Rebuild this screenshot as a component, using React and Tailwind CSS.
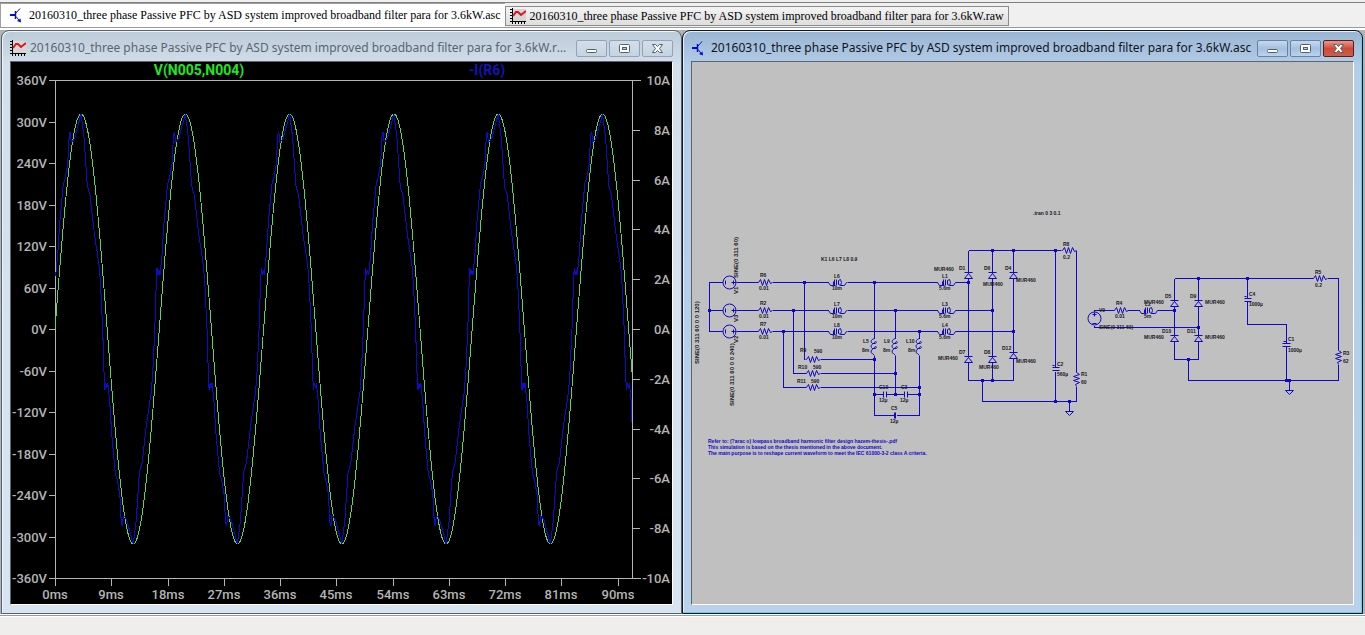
import clsx from 'clsx'

const FILE_NAME = '20160310_three phase Passive PFC by ASD system improved broadband filter para for 3.6kW'

// ---------- icons ----------

function SchematicIcon() {
  return (
    <svg viewBox="0 0 16 16" className="w-4 h-4 shrink-0" stroke="#0a0acd" fill="none">
      <path d="M1 8H6" strokeWidth="2" shapeRendering="crispEdges" />
      <path d="M6.500 4V12" strokeWidth="1.500" />
      <path d="M7 6L11 1.500M7 9.500L11 14.500" />
      <path d="M8 14L12 15.500L11.500 11.500Z" fill="#0a0acd" stroke="none" />
    </svg>
  )
}

function WaveIcon() {
  return (
    <svg viewBox="0 0 16 16" className="w-4 h-4 shrink-0" fill="none">
      <rect x="3" y="1" width="13" height="12" fill="#d6d6d6" />
      <path d="M2.500 0V16M0 13.500H16" stroke="#000" shapeRendering="crispEdges" />
      <path d="M0 1.500H2M0 4.500H2M0 7.500H2M0 10.500H2M5.500 14V16M8.500 14V16M11.500 14V16M14.500 14V16" stroke="#000" shapeRendering="crispEdges" />
      <path d="M3 8L6 4L8 4L11 7L16 3" stroke="#e0141c" strokeWidth="2" />
    </svg>
  )
}

function CaptionButton({ kind, active }) {
  const red = kind === 'Close' && active
  return (
    <button
      type="button"
      aria-label={kind}
      className={clsx(
        'w-[31px] h-[17px] rounded-xs border flex items-center justify-center',
        red && 'border-[#5c1a1a] bg-linear-to-b from-[#e39a8c] via-[#cf4a34] to-[#c8604c]',
        !red && active && 'border-[#6683a5] bg-linear-to-b from-[#c6d9ee] via-[#a4c0df] to-[#b9d3ec]',
        !red && !active && 'border-[#93a3b4] bg-linear-to-b from-[#d3deea] to-[#c5d3e2]'
      )}
    >
      <svg viewBox="0 0 13 11" className="w-[13px] h-[11px]" fill="#fff" stroke="#54606e">
        {kind === 'Minimize' && <rect x="1.500" y="6.500" width="10" height="3" rx="1" />}
        {kind === 'Restore' && (
          <>
            <rect x="1.500" y="1.500" width="10" height="8" rx="1" />
            <rect x="4.500" y="4.500" width="4" height="2" fill="#b4c8de" />
          </>
        )}
        {kind === 'Close' && (
          <path d="M1.500 1.500H4.500L6.500 3.500L8.500 1.500H11.500L8.500 5.500L11.500 9.500H8.500L6.500 7.500L4.500 9.500H1.500L4.500 5.500Z" />
        )}
      </svg>
    </button>
  )
}

// ---------- waveform plot ----------

const VOLT_TICKS = [
  [80, '360V'], [122, '300V'], [163, '240V'], [205, '180V'], [246, '120V'], [288, '60V'], [329, '0V'],
  [371, '-60V'], [412, '-120V'], [454, '-180V'], [495, '-240V'], [537, '-300V'], [578, '-360V'],
]
const AMP_TICKS = [
  [80, '10A'], [130, '8A'], [180, '6A'], [229, '4A'], [279, '2A'], [329, '0A'],
  [379, '-2A'], [429, '-4A'], [478, '-6A'], [528, '-8A'], [578, '-10A'],
]
const TIME_TICKS = [
  [55, '0ms'], [111, '9ms'], [168, '18ms'], [224, '27ms'], [280, '36ms'], [336, '45ms'],
  [393, '54ms'], [449, '63ms'], [505, '72ms'], [561, '81ms'], [618, '90ms'],
]

const PERIOD = 104.3
const LEFT = 55
const RIGHT = 632
const ZERO = 329

// one half cycle of the line current, [dx, height above zero]
const HALF_WAVE = [
  [0, 61], [1, 54], [2, 59], [3, 54], [5, 74], [7, 106], [10.6, 145], [12.5, 151], [15, 165], [16.5, 194],
  [17.5, 197], [18.5, 187], [20, 188], [22, 191], [24.6, 201], [28.3, 215], [31.3, 192], [34.6, 143],
  [37.3, 134], [41.6, 96], [46.6, 62], [48, 42], [50, 0], [51.2, -40],
]

function voltagePath() {
  const pts = []
  for (let x = LEFT; x <= RIGHT; x++) {
    pts.push(`${x},${(ZERO - 215 * Math.sin((2 * Math.PI * (x - LEFT)) / PERIOD)).toFixed(1)}`)
  }
  return pts.join(' ')
}

function currentPath() {
  const pts = ['55,275']
  for (let n = 0; n < 12; n++) {
    const start = 52.7 + (n * PERIOD) / 2
    const sign = n % 2 ? -1 : 1
    HALF_WAVE.forEach(([dx, h]) => {
      const x = start + dx
      if (x > LEFT && x <= RIGHT) pts.push(`${x.toFixed(1)},${ZERO - sign * h}`)
    })
  }
  pts.push('632,422')
  return pts.join(' ')
}

function WaveformPlot() {
  return (
    <svg viewBox="11 62 661 542" className="block w-full h-auto bg-black font-['Roboto',sans-serif] font-medium text-[13px]">
      <g stroke="#b4b4b4" fill="none" transform="translate(.5 .5)" shapeRendering="crispEdges">
        <path d="M48 80H640M48 578H640M55 80V578M632 80V578" />
        {VOLT_TICKS.map(([y]) => <path key={y} d={`M48 ${y}H55`} />)}
        {AMP_TICKS.map(([y]) => <path key={y} d={`M632 ${y}H639`} />)}
        {TIME_TICKS.map(([x]) => <path key={x} d={`M${x} 578V585`} />)}
      </g>
      <g fill="none" shapeRendering="crispEdges">
        <polyline points={voltagePath()} stroke="#5cd45c" />
        <polyline points={currentPath()} stroke="#0c0ccc" />
      </g>
      <g fill="#b4b4b4">
        {VOLT_TICKS.map(([y, t]) => <text key={t} x="47" y={y + 5} textAnchor="end">{t}</text>)}
        {AMP_TICKS.map(([y, t]) => <text key={t} x="670" y={y + 5} textAnchor="end">{t}</text>)}
        {TIME_TICKS.map(([x, t]) => <text key={t} x={x} y="599" textAnchor="middle">{t}</text>)}
      </g>
      <g className="font-bold text-[14px]" textAnchor="middle">
        <text x="199" y="75" fill="#22e622">V(N005,N004)</text>
        <text x="487" y="75" fill="#1414b4">-I(R6)</text>
      </g>
    </svg>
  )
}

// ---------- schematic ----------

const WIRES = [
  // three phase sources
  'M722 282H709V331H722M709 310H722',
  'M736 282H757M736 310H757M736 331H757',
  'M772 282H828M772 310H828M772 331H828',
  'M847 282H937M847 310H937M847 331H937',
  'M955 282H968M955 310H992M955 331H1013',
  // damping resistors and trap filter
  'M804 282V359M820 359H874',
  'M793 310V373H805M820 373H895',
  'M783 331V387H805M820 387H919',
  'M874 282V338M874 355V415H894M896 415H919V355',
  'M895 310V338M895 355V394M919 331V338',
  'M874 394H883M886 394H904M907 394H919',
  // main rectifier
  'M968 250H1060M968 250V380M992 250V380M1013 250V380M968 380H1013',
  'M982 380V401H1076V386M1076 371V250',
  'M1055 250V367M1055 371V401M1069 401V411',
  // single phase branch
  'M1094 311V310H1113M1127 310H1139M1157 310H1174',
  'M1094 325V327H1198',
  'M1174 278V359H1198V278M1174 278H1312M1327 278H1338V349M1338 364V380H1188V359',
  'M1247 278V298M1247 301V324H1286V342M1286 346V380M1289 380V390',
]

const JUNCTIONS = [
  [709, 310], [804, 282], [874, 282], [793, 310], [895, 310], [783, 331], [919, 331],
  [874, 359], [895, 373], [919, 387], [874, 394], [895, 394], [919, 394],
  [992, 250], [1013, 250], [1055, 250], [968, 282], [992, 310], [1013, 331], [982, 380], [992, 380],
  [1055, 401], [1069, 401], [1174, 310], [1198, 327], [1198, 278], [1247, 278], [1188, 359],
  [1286, 380], [1289, 380],
]

const RESISTORS = [
  [757, 282], [757, 310], [757, 331], [805, 359], [805, 373], [805, 387], [1061, 250], [1113, 310], [1312, 278],
  [1076, 371, 90], [1338, 349, 90],
]
const COILS = [[828, 282], [828, 310], [828, 331], [937, 282], [937, 310], [937, 331], [1139, 310]]
const TALL_COILS = [[874, 338], [895, 338], [919, 338]]
const DIODES = [
  [968, 275], [992, 275], [1013, 275], [968, 359], [992, 359], [1013, 355],
  [1174, 303], [1198, 303], [1174, 338], [1198, 338],
]

const LABELS = [
  [1033, 215, '.tran 0 3 0.1'], [821, 261, 'K1 L6 L7 L8 0.9'],
  [760, 277, 'R6'], [759, 290, '0.01'], [760, 305, 'R2'], [759, 318, '0.01'], [760, 326, 'R7'], [759, 339, '0.01'],
  [834, 278, 'L6'], [832, 290, '10m'], [834, 306, 'L7'], [832, 318, '10m'], [834, 327, 'L8'], [832, 339, '10m'],
  [942, 278, 'L1'], [939, 290, '5.6m'], [942, 306, 'L3'], [939, 318, '5.6m'], [942, 327, 'L4'], [939, 339, '5.6m'],
  [800, 352, 'R9'], [814, 353, '590'], [798, 369, 'R10'], [813, 369, '590'], [797, 383, 'R11'], [811, 383, '590'],
  [863, 343, 'L5'], [862, 352, '8m'], [884, 343, 'L9'], [883, 352, '8m'], [906, 343, 'L10'], [908, 352, '8m'],
  [879, 389, 'C10'], [879, 402, '12µ'], [901, 389, 'C3'], [900, 402, '12µ'], [891, 410, 'C5'], [890, 423, '12µ'],
  [934, 271, 'MUR460'], [959, 270, 'D1'], [984, 270, 'D6'], [1005, 270, 'D4'], [983, 286, 'MUR460'], [1016, 282, 'MUR460'],
  [959, 354, 'D7'], [938, 360, 'MUR460'], [984, 354, 'D8'], [979, 369, 'MUR460'], [1002, 350, 'D12'], [1016, 363, 'MUR460'],
  [1063, 246, 'R8'], [1063, 259, '0.2'], [1057, 366, 'C2'], [1057, 376, '560µ'], [1081, 376, 'R1'], [1081, 384, '60'],
  [1099, 312, 'V9'], [1099, 329, 'SINE(0 311 60)'], [1116, 305, 'R4'], [1115, 318, '0.01'],
  [1145, 306, 'L2'], [1144, 318, '5m'], [1144, 304, 'MUR460'], [1165, 298, 'D5'], [1190, 298, 'D9'], [1205, 304, 'MUR460'],
  [1162, 333, 'D10'], [1187, 333, 'D11'], [1144, 339, 'MUR460'], [1205, 339, 'MUR460'],
  [1249, 296, 'C4'], [1249, 306, '1000µ'], [1288, 341, 'C1'], [1288, 352, '1000µ'],
  [1315, 274, 'R5'], [1315, 287, '0.2'], [1343, 355, 'R3'], [1343, 363, '62'],
]

const VERTICAL_LABELS = [
  [738, 278, 'SINE(0 311 60)'], [699, 364, 'SINE(0 311 60 0 0 120)'], [734, 406, 'SINE(0 311 60 0 0 240)'],
  [738, 294, 'V1'], [738, 322, 'V3'], [738, 343, 'V2'],
]

function Schematic() {
  return (
    <svg viewBox="692 62 661 542" className="block w-full h-auto bg-[#c0c0c0] font-['Liberation_Sans',sans-serif] font-bold text-[5px]">
      <g stroke="#1008c4" fill="none" transform="translate(.5 .5)">
        <g shapeRendering="crispEdges">
          {WIRES.map(d => <path key={d} d={d} />)}
        </g>
        {[282, 310, 331].map(y => (
          <g key={y}>
            <circle cx="729" cy={y} r="6.500" />
            <path d={`M725 ${y - 2}V${y + 2}M731 ${y}H736M733 ${y - 2}V${y + 2}`} />
          </g>
        ))}
        <circle cx="1094" cy="318" r="6.500" />
        <path d="M1092 314H1096M1094 312V316M1092 323H1096" />
        {RESISTORS.map(([x, y, r = 0]) => (
          <path key={`${x}-${y}`} transform={`translate(${x} ${y}) rotate(${r})`} d="M0 0H1L3 -3L5 3L7 -3L9 3L11 -3L13 1L15 0" />
        ))}
        {COILS.map(([x, y]) => (
          <path key={`${x}-${y}`} transform={`translate(${x} ${y})`} d="M0 0L2 3H5V-1M5 3H7M6 -3V3M8 -3V3M10 -2V2L12 3L13 0L12 -3L10 -2M12 3H16L18 0H19" />
        ))}
        {TALL_COILS.map(([x, y]) => (
          <path key={`${x}-${y}`} transform={`translate(${x} ${y})`} d="M0 0C-4 1 -4 4 -2 5H1C3 3 1 2 -1 5C-4 6 -4 9 -2 10H1C3 8 1 7 -1 10C-4 11 -4 15 -2 15L0 17" />
        ))}
        {DIODES.map(([x, y]) => (
          <path key={`${x}-${y}`} transform={`translate(${x} ${y})`} d="M-4 -3H4M-4 3H4L0 -2Z" fill="#c0c0c0" />
        ))}
        <path d="M883 391V397M886 391V397M904 391V397M907 391V397M894 412V418M895 412V418" />
        <path d="M1052 367H1059M1052 370H1059M1052 365H1054M1244 298H1251M1244 301H1251M1244 296H1246M1282 343H1290M1282 346H1290M1283 341H1286" />
        <path d="M1065 411H1073L1069 415ZM1285 390H1293L1289 394Z" />
      </g>
      <g fill="#1008c4">
        {JUNCTIONS.map(([x, y]) => <rect key={`${x}-${y}`} x={x - 1} y={y - 1} width="3" height="3" />)}
      </g>
      <g fill="#181820">
        {LABELS.map(([x, y, t]) => <text key={`${x}-${y}`} x={x} y={y}>{t}</text>)}
        {VERTICAL_LABELS.map(([x, y, t]) => (
          <text key={`${x}-${y}`} transform={`translate(${x} ${y}) rotate(-90)`} className="text-[6px]">{t}</text>
        ))}
      </g>
      <g fill="#1008c4">
        <text x="708" y="443">Refer to: (?arac o) lowpass broadband harmonic filter design hazem-thesis-.pdf</text>
        <text x="708" y="449">This simulation is based on the thesis mentioned in the above document.</text>
        <text x="708" y="455">The main purpose is to reshape current waveform to meet the IEC 61000-3-2 class A criteria.</text>
      </g>
    </svg>
  )
}

// ---------- window chrome ----------

function ChildWindow({ title, icon, active, children }) {
  return (
    <section
      className={clsx(
        'min-w-0 rounded-t-lg border px-2 pb-2',
        active
          ? 'border-[#101820] bg-linear-to-b from-[#9ab5d3] from-0% via-[#b4cee9] via-6% to-[#b9d1ea] shadow-[inset_-1px_-1px_#5fd0e8,inset_1px_1px_#e4eefa]'
          : 'border-[#56606c] bg-linear-to-b from-[#bccbd9] from-0% via-[#d3dfeb] via-6% to-[#d7e4f2] shadow-[inset_1px_1px_#eef4fa]'
      )}
    >
      <header className="h-[30px] pt-1 flex items-center gap-1">
        {icon}
        <h2 className={clsx("flex-1 min-w-0 truncate font-['Noto_Sans',sans-serif] text-[12px] leading-5", active ? 'text-[#10141c]' : 'mr-1 text-[#5a6570]')}>
          {title}
        </h2>
        <div className="flex gap-0.5">
          <CaptionButton kind="Minimize" active={active} />
          <CaptionButton kind="Restore" active={active} />
          <CaptionButton kind="Close" active={active} />
        </div>
      </header>
      <div className="border border-t-[#5c6470] border-l-[#5c6470] border-r-white border-b-white">{children}</div>
    </section>
  )
}

export default function App() {
  return (
    <div className="min-h-screen flex flex-col bg-[#f0f0f0]">
      <nav className="mt-0.5 h-[25px] flex items-start border-t border-[#808080] font-['Liberation_Serif',serif] text-[12px] leading-5 text-black">
        <button type="button" className="h-6 pb-0.5 pl-2 pr-1 flex items-center gap-1 whitespace-nowrap bg-white border-l border-t border-[#a0a0a0]">
          <SchematicIcon />
          <span>{FILE_NAME}.asc</span>
        </button>
        <button type="button" className="mt-[3px] h-5 px-1 flex items-center gap-1 whitespace-nowrap bg-linear-to-b from-[#f4f4f4] to-[#dedede] border border-[#8c8c8c]">
          <WaveIcon />
          <span>{FILE_NAME}.raw</span>
        </button>
      </nav>
      <main className="border-y border-[#9a9a9a] bg-white pt-0.5 pb-px">
        <div className="grid grid-cols-2 pl-px pr-0.5 bg-[#b0b4b8]">
          <ChildWindow title={`${FILE_NAME}.raw`} icon={<WaveIcon />}>
            <WaveformPlot />
          </ChildWindow>
          <ChildWindow title={`${FILE_NAME}.asc`} icon={<SchematicIcon />} active>
            <Schematic />
          </ChildWindow>
        </div>
      </main>
      <footer className="flex-1 border-t border-white bg-[#f0eeec]" />
    </div>
  )
}
